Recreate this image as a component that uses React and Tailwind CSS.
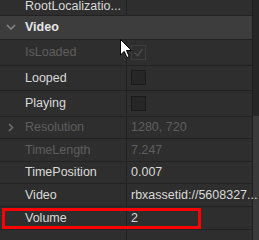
const rows = [
  { name: 'IsLoaded', disabled: true, h: 'h-[26px]', value: { type: 'check', checked: true, disabled: true } },
  { name: 'Looped', h: 'h-[26px]', value: { type: 'check' } },
  { name: 'Playing', h: 'h-[26px]', value: { type: 'check' } },
  { name: 'Resolution', disabled: true, h: 'h-[23px]', expand: true, value: { type: 'text', text: '1280, 720', disabled: true } },
  { name: 'TimeLength', disabled: true, h: 'h-[23px]', value: { type: 'text', text: '7.247', disabled: true } },
  { name: 'TimePosition', h: 'h-[23px]', value: { type: 'text', text: '0.007' } },
  { name: 'Video', h: 'h-[23px]', value: { type: 'text', text: 'rbxassetid://5608327...' } },
  { name: 'Volume', h: 'h-[24px]', value: { type: 'text', text: '2' }, highlight: true },
];

const Checkbox = ({ checked, disabled }) => (
  <div
    className={`w-[15px] h-[15px] border flex items-center justify-center ${
      disabled ? 'border-[#3c3c3c] bg-[#2e2e2e]' : 'border-[#1a1a1a] bg-[#262626]'
    }`}
  >
    {checked && (
      <svg width="11" height="11" viewBox="0 0 11 11" fill="none">
        <path d="M1.5 5.5 L4.5 8.5 L9.5 2" stroke="#4a4a4a" strokeWidth="1.5" />
      </svg>
    )}
  </div>
);

const Row = ({ row }) => (
  <div className={`relative flex ${row.h} border-b border-[#222222]`}>
    <div className="relative w-[127px] shrink-0 border-r border-[#222222] flex items-center pl-[25px]">
      {row.expand && (
        <svg className="absolute left-[8px]" width="6" height="9" viewBox="0 0 6 9" fill="none">
          <path d="M1 1 L4.5 4.5 L1 8" stroke="#6e6e6e" strokeWidth="1.6" />
        </svg>
      )}
      <span className={row.disabled ? 'text-[#5e5e5e]' : 'text-[#dadada]'}>{row.name}</span>
    </div>
    <div className="flex-1 flex items-center pl-[4px] min-w-0">
      {row.value.type === 'check' ? (
        <Checkbox checked={row.value.checked} disabled={row.value.disabled} />
      ) : (
        <span className={`whitespace-nowrap ${row.value.disabled ? 'text-[#5e5e5e]' : 'text-[#dadada]'}`}>
          {row.value.text}
        </span>
      )}
    </div>
    {row.highlight && (
      <div className="absolute left-[2px] top-[1px] w-[199px] h-[21px] border-[3px] border-[#ff0000]" />
    )}
  </div>
);

export default function App() {
  return (
    <div
      className="relative w-[259px] h-[240px] overflow-hidden bg-[#2e2e2e] flex text-[12.5px] leading-none"
      style={{ fontFamily: '"Liberation Sans", Arial, sans-serif' }}
    >
      <div className="w-[253px] shrink-0 border-r border-[#1e1e1e] flex flex-col">
        {/* partially scrolled row */}
        <div className="flex h-[16px] border-b border-[#222222]">
          <div className="w-[127px] shrink-0 border-r border-[#222222] flex items-end pl-[25px] pb-[2px]">
            <span className="text-[#dadada] whitespace-nowrap">RootLocalizatio...</span>
          </div>
          <div className="flex-1" />
        </div>

        {/* section header */}
        <div className="flex items-center h-[25px] bg-[#3d3d3d] border-b border-[#222222] relative">
          <svg className="absolute left-[6px]" width="10" height="6" viewBox="0 0 10 6" fill="none">
            <path d="M1 1 L5 5 L9 1" stroke="#858585" strokeWidth="1.6" />
          </svg>
          <span className="pl-[25px] font-bold text-[#e6e6e6]">Video</span>
        </div>

        {rows.map((row) => (
          <Row key={row.name} row={row} />
        ))}
        <div className="flex h-[10px]">
          <div className="w-[127px] shrink-0 border-r border-[#222222]" />
        </div>
      </div>

      {/* scrollbar */}
      <div className="flex-1 flex flex-col bg-[#262626]">
        <div className="h-[116px]" />
        <div className="flex-1 bg-[#3a3a3a]" />
      </div>

      {/* mouse cursor */}
      <svg className="absolute left-[120px] top-[39px]" width="13" height="20" viewBox="0 0 13 20">
        <path
          d="M0.5 0.5 L0.5 16 L4.2 12.4 L7 18.5 L9.2 17.5 L6.5 11.5 L11.5 11.5 Z"
          fill="#ffffff"
          stroke="#000000"
          strokeWidth="1"
          strokeLinejoin="round"
        />
      </svg>
    </div>
  );
}
